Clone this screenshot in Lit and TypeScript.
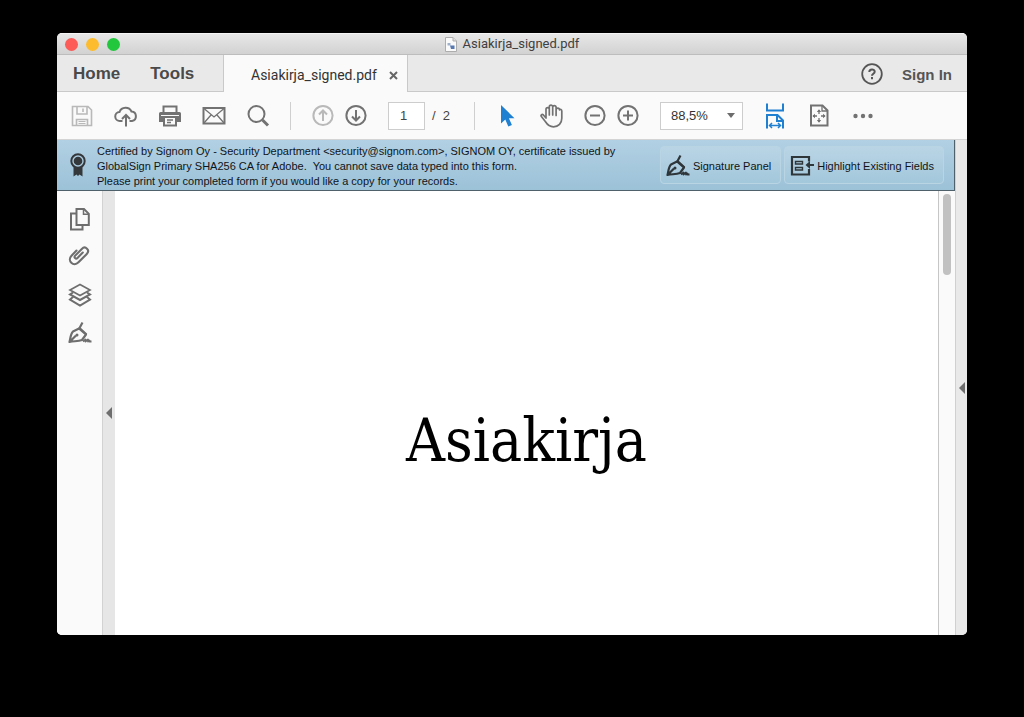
import { LitElement, html, css, svg } from "lit";
import { customElement, state } from "lit/decorators.js";

const icon = (body: unknown, size = 24) => html`<svg
  width=${size} height=${size} viewBox="0 0 24 24" fill="none"
  stroke="currentColor" stroke-width="2" aria-hidden="true">${body}</svg>`;

const icons = {
  save: svg`<path stroke-width="1.6" d="M2.500 2.500h15.500l3.500 3.500v15.500h-19z M7 2.500v7.500h10V2.500 M6.500 21.500v-6h11v6"/><path stroke-width="1.6" d="M13 4.500v3.500"/><path stroke-width="1" d="M8.500 17.500h7M8.500 19.500h7"/>`,
  cloud: svg`<path d="M8.500 17H6a4.500 4.500 0 0 1-.5-9A6.500 6.500 0 0 1 17.500 7.500 4.800 4.800 0 0 1 18 17h-2.500"/><path d="M12 22.500V11M8 15l4-4 4 4"/>`,
  print: svg`<path d="M5.500 8V2.500h13V8"/><path fill="currentColor" stroke="none" d="M2.500 8h19a1.500 1.500 0 0 1 1.500 1.500V18h-4v-4H5v4H1V9.500A1.500 1.500 0 0 1 2.500 8z"/><path d="M6 13v8.500h12V13"/><path stroke-width="1.500" d="M9 16h6M9 18.500h4"/><path stroke="#fafafa" stroke-width="1.200" d="M3 11.500h18"/>`,
  mail: svg`<path d="M1.500 4h21v15.500h-21z"/><path stroke-width="1.300" d="M2 4.500l10 8.500L22 4.500M2 19l7-8M22 19l-7-8"/>`,
  search: svg`<circle cx="10.500" cy="10" r="8"/><path stroke-width="3" d="M16.500 16l5.500 5.500"/>`,
  up: svg`<circle cx="12" cy="11.500" r="9.600"/><path d="M12 17V6.500M8 10.500l4-4 4 4"/>`,
  down: svg`<circle cx="12" cy="11.500" r="9.600"/><path d="M12 6v10.500M8 12.500l4 4 4-4"/>`,
  pointer: svg`<path fill="currentColor" stroke="none" d="M6 1v18.500l4.300-4 3 7 3.600-1.500-3-6.700h5.600z"/>`,
  hand: svg`<path stroke-width="1.700" stroke-linecap="round" stroke-linejoin="round" d="M7 14V5.300a1.600 1.600 0 0 1 3.300 0V11 2.800a1.600 1.600 0 0 1 3.400 0V11 3.300a1.600 1.600 0 0 1 3.400 0V11.500 5.800a1.700 1.700 0 0 1 3.400 0c.8-.8 2.300-.3 2.300 1.300v7.200c0 5-3.300 8.500-8.300 8.500-4 0-6-1.800-8-5L2.200 12.300C1.500 11 3 9.800 4.400 11z"/>`,
  minus: svg`<circle cx="12" cy="11.500" r="9.600"/><path d="M7 11.500h10"/>`,
  plus: svg`<circle cx="12" cy="11.500" r="9.600"/><path d="M7 11.500h10M12 6.500v10"/>`,
  fitWidth: svg`<path d="M4 -.5v7h16v-7"/><path d="M4 24.500V11h10.500l5.500 5.500v8M14 11v6h6"/><path stroke-width="1.500" d="M7 21.500h10M9 19l-2.500 2.500L9 24M15 19l2.500 2.500L15 24"/>`,
  fitPage: svg`<path d="M4 1.500h11.500L20.500 6.500v15H4z"/><path stroke-width="1.300" d="M15 2V7h5"/><path stroke-width="1.300" d="M12 6v4M12 14v4M6 12h4M14 12h4"/><path fill="currentColor" stroke="none" d="M9.800 8L12 5.300l2.200 2.700zM9.800 16L12 18.700l2.200-2.700zM8 9.800L5.400 12 8 14.200zM16 9.800l2.600 2.200L16 14.200z"/>`,
  more: svg`<g fill="currentColor" stroke="none"><circle cx="4.500" cy="12" r="2.200"/><circle cx="12" cy="12" r="2.200"/><circle cx="19.500" cy="12" r="2.200"/></g>`,
  help: svg`<circle cx="12" cy="12" r="9.800" stroke-width="1.800"/><path d="M9.300 10C9.300 6.700 14.700 6.700 14.700 9.700c0 2-2.700 2-2.700 4"/><path d="M12 15v2.200"/>`,
  pages: svg`<path d="M8.500 2h7.500L20.800 6.800V18H8.500z"/><path stroke-width="1.500" d="M15.500 2v5.300h5.300"/><path d="M8.500 6.500H3V22.500h11.500V18.500"/>`,
  clip: svg`<path stroke-width="2.100" stroke-linecap="round" transform="translate(-1 -2)" d="M15.800 9.500l-5.300 5.400c-1.700 1.700-4-.5-2.300-2.300l6.600-6.700c3.600-3.600 8.600 1.300 5 5l-8.300 8.400c-5 5-11.800-1.500-7-6.600l5-5.200"/>`,
  layers: svg`<path stroke-width="1.700" d="M12 1.500L22 7 12 12.500 2 7z"/><path stroke-width="2" d="M5 9.500L2 11.500 12 17l10-5.500-3-2M5 14L2 16.500 12 22.500l10-6-3-2.500"/>`,
  pen: svg`<path stroke-width="2.200" stroke-linejoin="round" d="M1.500 21C2.500 17 2.500 13 5 10.500L11 7.500 18 13.500 14 19C10 20.500 6 20 1.500 21zL8 14.500"/><path stroke-width="2.200" d="M11 8l3.500-6.500M11.500 7l7 6.500"/><circle cx="9" cy="14" r="1.500" fill="currentColor" stroke="none"/><path stroke-width="1.800" stroke-linejoin="round" d="M15 20.500l2.500-2v2l2.500-2v2l1.500-1v1h2"/>`,
  field: svg`<path stroke-width="2.200" d="M19 7.500V3H2v17.500h17V15"/><path stroke-width="1.400" d="M5.500 7.500h7v2.500h-7zM5.500 13.500h7v2.500h-7z"/><path stroke-width="2.200" d="M18 11h6"/><path fill="currentColor" stroke="none" d="M20 7v8L15.500 11z"/>`,
};

@customElement("app-root")
export class AppRoot extends LitElement {
  @state() private page = "1";

  static styles = css`
    :host {
      display: block;
      box-sizing: border-box;
      height: 100vh;
      padding: 33px 57px 82px;
      background: #000;
      color: #4a4a4a;
      font-family: "Liberation Sans", Arial, sans-serif;
      overflow: hidden;
    }
    button, select, input { font: inherit; color: inherit; }
    button { border: 0; padding: 0; background: none; display: flex; align-items: center; justify-content: center; }
    svg { display: block; overflow: visible; flex: none; }
    .window { height: 100%; display: flex; flex-direction: column; border-radius: 5px; overflow: hidden; background: #fafafa; }
    .titlebar {
      box-sizing: border-box; height: 22px; flex: none;
      display: grid; grid-template-columns: 1fr auto 1fr; align-items: center;
      padding: 0 8px; border-top: 1px solid #f5f5f5; border-bottom: 1px solid #bdbdbd;
      background: linear-gradient(#e7e7e7, #d2d2d2);
    }
    .lights { display: flex; gap: 8px; }
    .light { width: 13px; height: 13px; border-radius: 50%; }
    .close { background: #fc5b57; }
    .minimise { background: #fdbc2e; }
    .zoom { background: #23c73e; }
    .title { display: flex; align-items: center; gap: 6px; font: 13px/20px Roboto, sans-serif; color: #404040; }
    .tabs { height: 37px; flex: none; display: flex; background: #e9e9e9; }
    .tab { box-sizing: border-box; display: flex; align-items: center; border-bottom: 1px solid #c9c9c9; }
    .views { width: 167px; gap: 30px; padding: 2px 0 0 16px; border-right: 1px solid #c9c9c9; font-size: 17px; font-weight: bold; }
    .document-tab { gap: 12px; padding: 3px 9px 0 27px; background: #fafafa; border-bottom: 0; border-right: 1px solid #c9c9c9; font: 14px/20px Roboto, sans-serif; color: #333; }
    .account { flex: 1; justify-content: flex-end; gap: 18px; padding: 2px 15px 0 0; color: #555; font-size: 15px; font-weight: bold; }
    .toolbar {
      box-sizing: border-box; height: 48px; flex: none; display: flex; align-items: center;
      gap: 20px; padding-left: 13px; border-bottom: 1px solid #d4d4d4; color: #727272;
    }
    .group { display: flex; align-items: center; gap: 9px; }
    .pager { width: 66px; gap: 7px; font-size: 13px; color: #444; }
    .disabled { color: #b9b9b9; }
    .active { color: #1f7fd1; }
    .rule { width: 1px; height: 28px; background: #cfcfcf; }
    .page { box-sizing: border-box; width: 37px; height: 28px; padding: 0 0 0 11px; border: 1px solid #cdcdcd; background: #fff; }
    .level { display: grid; align-items: center; width: 83px; font-size: 13px; color: #333; }
    .level > * { grid-area: 1 / 1; }
    .level select { appearance: none; width: 100%; height: 28px; padding: 0 10px; border: 1px solid #cdcdcd; border-radius: 0; background: #fff; }
    .level svg { justify-self: end; margin-right: 8px; color: #6c6c6c; pointer-events: none; }
    .body { flex: 1; min-height: 0; display: flex; }
    .main { flex: 1; min-width: 0; display: flex; flex-direction: column; }
    .banner {
      box-sizing: border-box; min-height: 51px; flex: none; display: flex; align-items: center; gap: 3px;
      padding: 0 10px 0 9px; border-right: 1px solid #4f626c; border-bottom: 1px solid #4f626c;
      background: linear-gradient(#b2d0e3, #9cc2d8); color: #101418; font-size: 11px; line-height: 15px;
    }
    .banner > svg { color: #34383b; }
    .notice { flex: 1; margin: 0 0 0 4px; padding-top: 2px; }
    .action { box-sizing: border-box; height: 38px; gap: 3px; padding: 2px 9px 0 5px; border: 1px solid #b9d5e4; border-radius: 4px; background: linear-gradient(#b9d5e5, #a3c7db); white-space: nowrap; }
    .action svg { color: #2f363a; }
    .viewer { flex: 1; min-height: 0; display: flex; background: #fff; }
    .side { box-sizing: border-box; width: 46px; display: flex; flex-direction: column; align-items: center; gap: 14px; padding-top: 16px; background: #fafafa; border-right: 1px solid #d2d2d2; color: #6e6e6e; }
    .handle { box-sizing: border-box; width: 12px; background: #e6e6e6; color: #6e6e6e; }
    .handle.right { border-left: 1px solid #d0d0d0; background: #e9e9e9; }
    .sheet { flex: 1; min-width: 0; display: flex; align-items: center; justify-content: center; }
    h1 { margin: 0; padding-top: 54px; font: 60px/70px "DejaVu Serif Condensed", "DejaVu Serif", serif; color: #000; }
    .scroll { box-sizing: border-box; width: 17px; padding-top: 3px; border-left: 1px solid #c6c6c6; background: #fafafa; }
    .thumb { width: 8px; height: 81px; margin: 0 auto; border-radius: 4px; background: #c1c1c1; }
  `;

  private tool(name: keyof typeof icons, label: string, cls = "") {
    return html`<button class=${cls} aria-label=${label}>${icon(icons[name])}</button>`;
  }

  private handle(cls: string, label: string) {
    return html`<button class="handle ${cls}" aria-label=${label}>
      <svg width="6" height="12" viewBox="0 0 6 12" fill="currentColor"><path d="M6 0v12L0 6z" /></svg>
    </button>`;
  }

  render() {
    return html`<div class="window">
      <header class="titlebar">
        <div class="lights">
          <button class="light close" aria-label="Close"></button>
          <button class="light minimise" aria-label="Minimise"></button>
          <button class="light zoom" aria-label="Zoom"></button>
        </div>
        <div class="title">
          <svg width="12" height="15" viewBox="0 0 12 15">
            <path d="M.5.5h7.500l3.500 3.500v10.500H.5z" fill="#fafafa" stroke="#adadad" />
            <path d="M8 .5V4h3.500" fill="#ddd" stroke="#adadad" />
            <path d="M2.500 6h3v2.500h-3z" fill="#9fb0ca" />
            <path d="M5 8.500h4.500V12H6z" fill="#5879b0" />
          </svg>
          <span>Asiakirja_signed.pdf</span>
        </div>
      </header>

      <nav class="tabs">
        <div class="tab views"><button>Home</button><button>Tools</button></div>
        <div class="tab document-tab">
          <span>Asiakirja_signed.pdf</span>
          <button aria-label="Close tab">
            <svg width="9" height="9" viewBox="0 0 9 9" stroke="#666" stroke-width="2"><path d="M1 1l7 7M8 1L1 8" /></svg>
          </button>
        </div>
        <div class="tab account">
          ${this.tool("help", "Help")}
          <button>Sign In</button>
        </div>
      </nav>

      <div class="toolbar" role="toolbar">
        ${this.tool("save", "Save", "disabled")}
        ${this.tool("cloud", "Upload")}
        ${this.tool("print", "Print")}
        ${this.tool("mail", "Send by email")}
        ${this.tool("search", "Find")}
        <span class="rule"></span>
        <div class="group">
          ${this.tool("up", "Previous page", "disabled")}
          ${this.tool("down", "Next page")}
        </div>
        <div class="group pager">
          <input class="page" aria-label="Page number" .value=${this.page}
            @change=${(e: Event) => (this.page = (e.target as HTMLInputElement).value)} />
          <span>/&nbsp; 2</span>
        </div>
        <span class="rule"></span>
        ${this.tool("pointer", "Select", "active")}
        ${this.tool("hand", "Pan")}
        <div class="group">
          ${this.tool("minus", "Zoom out")}
          ${this.tool("plus", "Zoom in")}
        </div>
        <div class="level">
          <select aria-label="Zoom level"><option>88,5%</option><option>100%</option></select>
          <svg width="8" height="5" viewBox="0 0 8 5" fill="currentColor"><path d="M0 0h8L4 5z" /></svg>
        </div>
        ${this.tool("fitWidth", "Fit width", "active")}
        ${this.tool("fitPage", "Fit page")}
        ${this.tool("more", "More tools")}
      </div>

      <div class="body">
        <div class="main">
          <section class="banner">
            <svg width="24" height="26" viewBox="0 0 24 26" fill="currentColor">
              <path d="M7.500 14h9v10.500l-3-2-1.500 1.500-1.500-1.500-3 2z" />
              <circle cx="12" cy="9" r="6.700" fill="#a9cadd" stroke="currentColor" stroke-width="2" />
              <circle cx="12" cy="9" r="4.300" />
            </svg>
            <p class="notice">Certified by Signom Oy - Security Department &lt;security@signom.com&gt;, SIGNOM OY, certificate issued by<br>GlobalSign Primary SHA256 CA for Adobe.&nbsp; You cannot save data typed into this form.<br>Please print your completed form if you would like a copy for your records.</p>
            <button class="action">${icon(icons.pen)}Signature Panel</button>
            <button class="action">${icon(icons.field)}Highlight Existing Fields</button>
          </section>
          <div class="viewer">
            <aside class="side">
              ${this.tool("pages", "Page thumbnails")}
              ${this.tool("clip", "Attachments")}
              ${this.tool("layers", "Layers")}
              ${this.tool("pen", "Signatures")}
            </aside>
            ${this.handle("", "Collapse navigation pane")}
            <article class="sheet"><h1>Asiakirja</h1></article>
            <div class="scroll"><div class="thumb"></div></div>
          </div>
        </div>
        ${this.handle("right", "Open tools pane")}
      </div>
    </div>`;
  }
}
